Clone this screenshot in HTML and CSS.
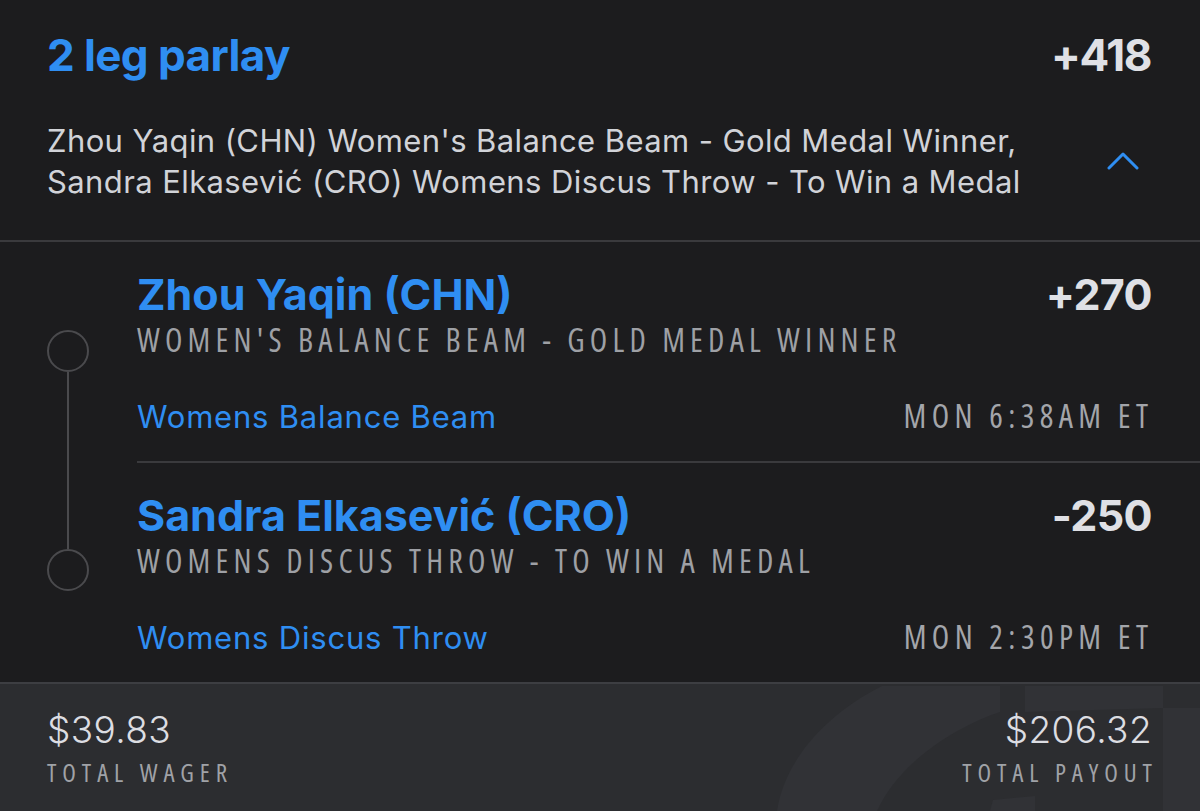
FILE: index.html
```html
<!DOCTYPE html>
<html lang="en">
<head>
<meta charset="utf-8">
<title>2 leg parlay</title>
<link rel="stylesheet" href="styles.css">
</head>
<body>
<main class="card">
  <header class="parlay">
    <div class="parlay-top">
      <h1 class="parlay-title">2 leg parlay</h1>
      <span class="parlay-odds">+418</span>
    </div>
    <div class="parlay-desc">
      <p class="desc-text">Zhou Yaqin (CHN) Women's Balance Beam - Gold Medal Winner,<br>Sandra Elkasević (CRO) Womens Discus Throw - To Win a Medal</p>
      <svg class="chevron" width="32" height="20" viewBox="0 0 32 20" aria-hidden="true">
        <polyline points="2,17 16,3 30,17" fill="none" stroke="#2f8ef2" stroke-width="3" stroke-linecap="round" stroke-linejoin="round"/>
      </svg>
    </div>
  </header>

  <section class="legs">
    <div class="leg">
      <div class="rail rail-first">
        <span class="rail-gap"></span>
        <span class="rail-dot"></span>
        <span class="rail-line"></span>
      </div>
      <div class="leg-body">
        <div class="leg-head">
          <span class="leg-name">Zhou Yaqin (CHN)</span>
          <span class="leg-odds">+270</span>
        </div>
        <div class="leg-market">WOMEN'S BALANCE BEAM - GOLD MEDAL WINNER</div>
        <div class="leg-foot">
          <span class="leg-event">Womens Balance Beam</span>
          <span class="leg-time">MON 6:38AM ET</span>
        </div>
      </div>
    </div>
    <div class="leg">
      <div class="rail rail-last">
        <span class="rail-line rail-line-top"></span>
        <span class="rail-dot"></span>
        <span class="rail-gap-end"></span>
      </div>
      <div class="leg-body leg-body-last">
        <div class="leg-head">
          <span class="leg-name">Sandra Elkasević (CRO)</span>
          <span class="leg-odds">-250</span>
        </div>
        <div class="leg-market">WOMENS DISCUS THROW - TO WIN A MEDAL</div>
        <div class="leg-foot">
          <span class="leg-event">Womens Discus Throw</span>
          <span class="leg-time">MON 2:30PM ET</span>
        </div>
      </div>
    </div>
  </section>

  <footer class="totals">
    <svg class="watermark" width="1200" height="127" viewBox="0 684 1200 127" preserveAspectRatio="none" aria-hidden="true">
      <path d="M777 811 C785 760 825 715 882 686 L1000 686 L1000 712 C960 725 900 760 877 811 Z" />
      <path d="M1025 686 L1163 686 L1163 708 L1025 712 Z" />
      <path d="M1163 708 L1200 708 L1200 811 L1163 811 Z" />
      <path d="M993 800 L1035 796 L1035 811 L990 811 Z" />
    </svg>
    <div class="total">
      <span class="total-amount">$39.83</span>
      <span class="total-label">TOTAL WAGER</span>
    </div>
    <div class="total total-right">
      <span class="total-amount">$206.32</span>
      <span class="total-label">TOTAL PAYOUT</span>
    </div>
  </footer>
</main>
</body>
</html>
```

FILE: styles.css
```css
* { box-sizing: border-box; }

html, body {
  margin: 0;
  padding: 0;
  background: #1c1c1e;
}

body {
  width: 1200px;
  height: 811px;
  overflow: hidden;
  font-family: "Inter", "Lato", sans-serif;
  color: #d4d6db;
}

.card {
  display: flex;
  flex-direction: column;
  height: 811px;
}

/* ---------- header ---------- */
.parlay {
  padding: 27px 48px 0 47px;
  border-bottom: 2px solid #3a3a3d;
  height: 242px;
}

.parlay-top {
  display: flex;
  justify-content: space-between;
  align-items: baseline;
  height: 56px;
}

.parlay-title {
  margin: 0;
  font-size: 44px;
  line-height: 56px;
  font-weight: 700;
  letter-spacing: -0.6px;
  color: #2f8ef2;
}

.parlay-odds {
  font-size: 44px;
  line-height: 56px;
  font-weight: 700;
  letter-spacing: -1.4px;
  margin-right: 1px;
  color: #dfe0e5;
}

.parlay-desc {
  display: flex;
  justify-content: space-between;
  align-items: center;
  margin-top: 37px;
}

.desc-text {
  margin: 0;
  font-size: 31px;
  line-height: 41px;
  font-weight: 400;
  letter-spacing: 0.4px;
  color: #d1d3d8;
}

.chevron {
  display: block;
  margin-right: 13px;
}

/* ---------- legs ---------- */
.legs {
  display: flex;
  flex-direction: column;
}

.leg {
  display: flex;
}

.rail {
  width: 137px;
  flex: 0 0 137px;
  display: flex;
  flex-direction: column;
  align-items: center;
  padding-right: 2px;
}

.rail-gap {
  height: 88px;
  flex: 0 0 88px;
}

.rail-dot {
  width: 42px;
  height: 42px;
  flex: 0 0 42px;
  border: 2.5px solid #4a4a4d;
  border-radius: 50%;
}

.rail-line {
  width: 2px;
  background: #4a4a4d;
  flex: 1 1 auto;
}

.rail-line.rail-line-top {
  flex: 0 0 86px;
}

.rail-gap-end {
  flex: 1 1 auto;
}

.leg-body {
  flex: 1 1 auto;
  padding: 26px 48px 25px 0;
  border-bottom: 2px solid #3a3a3d;
}

.leg-body-last {
  border-bottom: none;
}

.leg-head {
  display: flex;
  justify-content: space-between;
  align-items: baseline;
  height: 52px;
}

.leg-name {
  font-size: 43px;
  line-height: 52px;
  font-weight: 700;
  color: #2f8ef2;
}

.leg-odds {
  font-size: 43px;
  line-height: 52px;
  font-weight: 700;
  letter-spacing: -0.6px;
  color: #dfe0e5;
}

.leg-market {
  margin-top: 2px;
  font-family: "Open Sans", sans-serif;
  font-stretch: 75%;
  font-size: 32px;
  line-height: 36px;
  letter-spacing: 5.2px;
  color: #9ea0a5;
}

.leg-foot {
  display: flex;
  justify-content: space-between;
  align-items: baseline;
  margin-top: 38px;
  height: 40px;
}

.leg-event {
  font-size: 31px;
  line-height: 40px;
  letter-spacing: 0.8px;
  color: #2f8ef2;
}

.leg-time {
  font-family: "Open Sans", sans-serif;
  font-stretch: 75%;
  font-size: 32px;
  line-height: 40px;
  letter-spacing: 5.4px;
  color: #a3a5aa;
  margin-right: -1.4px;
}

/* ---------- footer ---------- */
.totals {
  position: relative;
  flex: 1 1 auto;
  display: flex;
  justify-content: space-between;
  padding: 24px 48px 0 47px;
  background: #2c2d30;
  border-top: 2px solid #3d3e42;
  overflow: hidden;
}

.watermark {
  position: absolute;
  left: 0;
  top: 0;
  fill: #313236;
  pointer-events: none;
}

.total {
  position: relative;
  display: flex;
  flex-direction: column;
  align-items: flex-start;
}

.total-right {
  align-items: flex-end;
}

.total-amount {
  font-size: 37px;
  line-height: 44px;
  font-weight: 300;
  letter-spacing: 0.4px;
  color: #dcdde2;
}

.total-label {
  margin-top: 6px;
  font-family: "Open Sans", sans-serif;
  font-stretch: 75%;
  font-size: 25px;
  line-height: 28px;
  letter-spacing: 5.9px;
  color: #a0a2a7;
  margin-right: -5.9px;
}
```
